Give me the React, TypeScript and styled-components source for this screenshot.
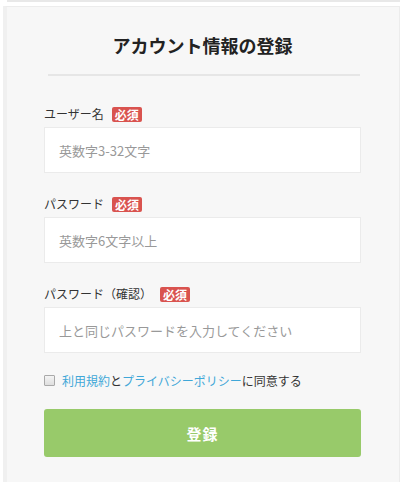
import React from "react";
import styled, { createGlobalStyle } from "styled-components";

const Global = createGlobalStyle`
  html, body { margin: 0; padding: 0; background: #ffffff; }
  body { font-family: "Noto Sans CJK JP", "Noto Sans", sans-serif; color: #333; }
  * { box-sizing: border-box; }
`;

const Page = styled.div`
  width: 405px;
  height: 482px;
  overflow: hidden;
  padding: 0 5px 0 3px;
  display: flex;
  flex-direction: column;
`;

const TopEdge = styled.div`
  height: 2px;
  margin-left: 4px;
  background: #e8e8e8;
  flex: none;
`;

const Card = styled.section`
  margin-top: 4px;
  flex: 1;
  background: #f7f7f7;
  border: 1px solid #ececec;
  border-left: 4px solid #f0f0f0;
  border-bottom: none;
  padding: 25px 38px 0 37px;
  display: flex;
  flex-direction: column;
`;

const Title = styled.h1`
  margin: 0;
  font-size: 18px;
  line-height: 26px;
  font-weight: 700;
  text-align: center;
  color: #222;
`;

const Divider = styled.hr`
  margin: 16px 1px 0 4px;
  border: none;
  height: 2px;
  background: #e6e6e6;
`;

const Form = styled.form`
  margin-top: 30px;
  display: flex;
  flex-direction: column;
`;

const Field = styled.div<{ $gap?: number }>`
  display: flex;
  flex-direction: column;
  margin-bottom: ${(p) => p.$gap ?? 23}px;
`;

const LabelRow = styled.label`
  display: flex;
  align-items: center;
  gap: 8px;
  height: 16px;
  font-size: 12px;
  line-height: 16px;
  color: #333;
  margin-bottom: 5px;
`;

const Badge = styled.span`
  display: inline-block;
  background: #d9534f;
  color: #fff;
  font-size: 12px;
  font-weight: 700;
  line-height: 15px;
  padding: 0 3px;
  border-radius: 2px;
`;

const Input = styled.input`
  width: 100%;
  height: 46px;
  border: 1px solid #ebebeb;
  background: #fff;
  padding: 0 14px;
  font-family: inherit;
  font-size: 13px;
  color: #333;
  outline: none;
  &::placeholder { color: #999; }
`;

const AgreeRow = styled.div`
  display: flex;
  align-items: center;
  gap: 7px;
  height: 16px;
  margin-top: -2px;
  font-size: 12px;
  color: #333;
`;

const Check = styled.span`
  width: 11px;
  height: 11px;
  border: 1px solid #a9a9a9;
  background: linear-gradient(#f4f4f4, #dedede);
  border-radius: 1px;
  flex: none;
`;

const Link = styled.a`
  color: #3fa7d8;
  text-decoration: none;
`;

const Submit = styled.button`
  margin-top: 21px;
  height: 48px;
  width: 100%;
  border: none;
  border-radius: 3px;
  background: #98ca6a;
  color: #fff;
  font-family: inherit;
  font-size: 15px;
  font-weight: 700;
  letter-spacing: 1px;
`;

export default function App() {
  return (
    <>
      <Global />
      <Page>
        <TopEdge />
        <Card>
          <Title>アカウント情報の登録</Title>
          <Divider />
          <Form onSubmit={(e) => e.preventDefault()}>
            <Field>
              <LabelRow>
                ユーザー名<Badge>必須</Badge>
              </LabelRow>
              <Input placeholder="英数字3-32文字" />
            </Field>
            <Field>
              <LabelRow>
                パスワード<Badge>必須</Badge>
              </LabelRow>
              <Input type="password" placeholder="英数字6文字以上" />
            </Field>
            <Field $gap={21}>
              <LabelRow>
                パスワード（確認）<Badge>必須</Badge>
              </LabelRow>
              <Input type="password" placeholder="上と同じパスワードを入力してください" />
            </Field>
            <AgreeRow>
              <Check />
              <span>
                <Link href="#">利用規約</Link>と<Link href="#">プライバシーポリシー</Link>に同意する
              </span>
            </AgreeRow>
            <Submit type="submit">登録</Submit>
          </Form>
        </Card>
      </Page>
    </>
  );
}
